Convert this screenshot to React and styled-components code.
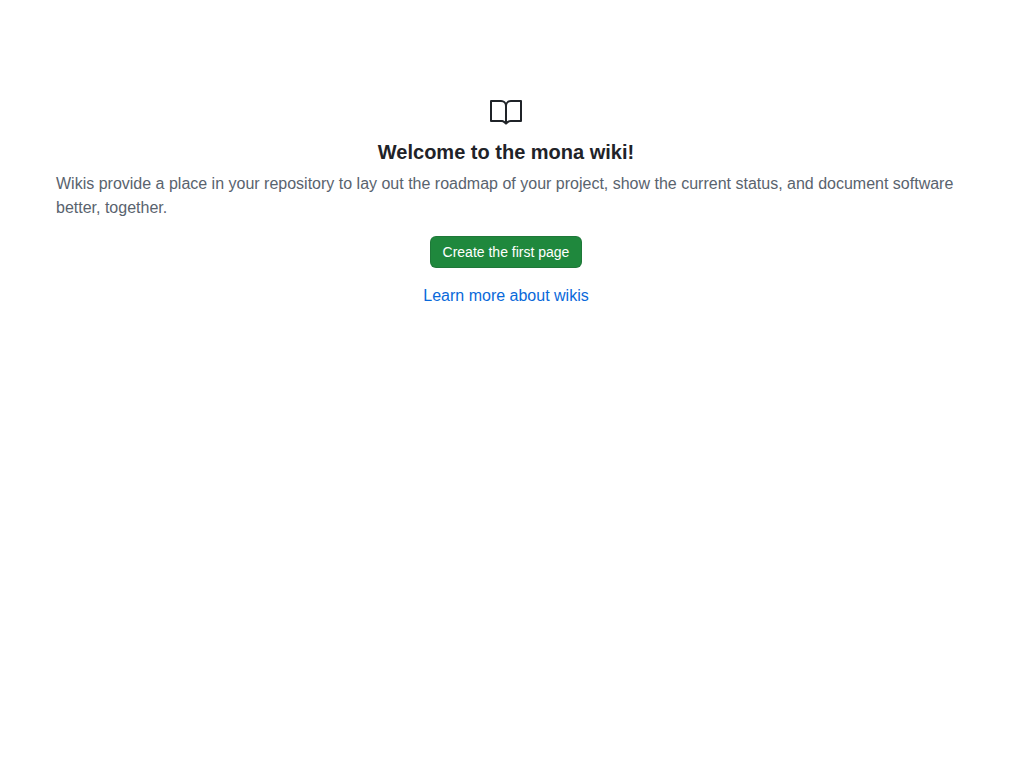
import React from "react";
import styled, { createGlobalStyle } from "styled-components";

const GlobalStyle = createGlobalStyle`
  *, *::before, *::after { box-sizing: border-box; }
  body {
    margin: 0;
    background: #ffffff;
    color: #1f2328;
    font-family: "Liberation Sans", Arial, sans-serif;
    font-size: 16px;
    line-height: 24px;
  }
`;

const Page = styled.main`
  padding: 64px 24px;
`;

const Blankslate = styled.section`
  display: flex;
  flex-direction: column;
  align-items: center;
  padding: 32px;
`;

const Visual = styled.div`
  display: flex;
  margin-bottom: 8px;
`;

const Heading = styled.h2`
  margin: 0 0 4px;
  font-size: 20px;
  font-weight: 600;
  line-height: 32px;
  text-align: center;
`;

const Description = styled.p`
  margin: 0;
  color: #59636e;
`;

const Action = styled.div`
  display: flex;
  margin-top: 16px;
`;

const PrimaryButton = styled.button`
  height: 32px;
  padding: 0 12px;
  border: 1px solid rgba(31, 35, 40, 0.15);
  border-radius: 6px;
  background: #1f883d;
  color: #ffffff;
  font-family: inherit;
  font-size: 14px;
  font-weight: 500;
  line-height: 20px;
  cursor: pointer;
`;

const TextLink = styled.a`
  color: #0969da;
  text-decoration: none;

  &:hover {
    text-decoration: underline;
  }
`;

function BookIcon() {
  return (
    <svg width="32" height="32" viewBox="0 0 24 24" fill="#1f2328" aria-hidden="true">
      <path d="M0 3.75A.75.75 0 0 1 .75 3h7.497c1.566 0 2.945.8 3.751 2.014A4.495 4.495 0 0 1 15.75 3h7.5a.75.75 0 0 1 .75.75v15.063a.752.752 0 0 1-.755.75l-7.682-.052a3 3 0 0 0-2.142.878l-.89.891a.75.75 0 0 1-1.061 0l-.902-.901a2.996 2.996 0 0 0-2.121-.879H.75a.75.75 0 0 1-.75-.75Zm12.75 15.232a4.503 4.503 0 0 1 2.823-.971l6.927.047V4.5h-6.75a3 3 0 0 0-3 3ZM11.247 7.497a3 3 0 0 0-3-2.997H1.5V18h6.947c1.018 0 2.006.346 2.803.98Z" />
    </svg>
  );
}

export default function App() {
  return (
    <>
      <GlobalStyle />
      <Page>
        <Blankslate>
          <Visual>
            <BookIcon />
          </Visual>
          <Heading>Welcome to the mona wiki!</Heading>
          <Description>
            Wikis provide a place in your repository to lay out the roadmap of your project, show the current status, and document software better, together.
          </Description>
          <Action>
            <PrimaryButton type="button">Create the first page</PrimaryButton>
          </Action>
          <Action>
            <TextLink href="#wikis">Learn more about wikis</TextLink>
          </Action>
        </Blankslate>
      </Page>
    </>
  );
}
